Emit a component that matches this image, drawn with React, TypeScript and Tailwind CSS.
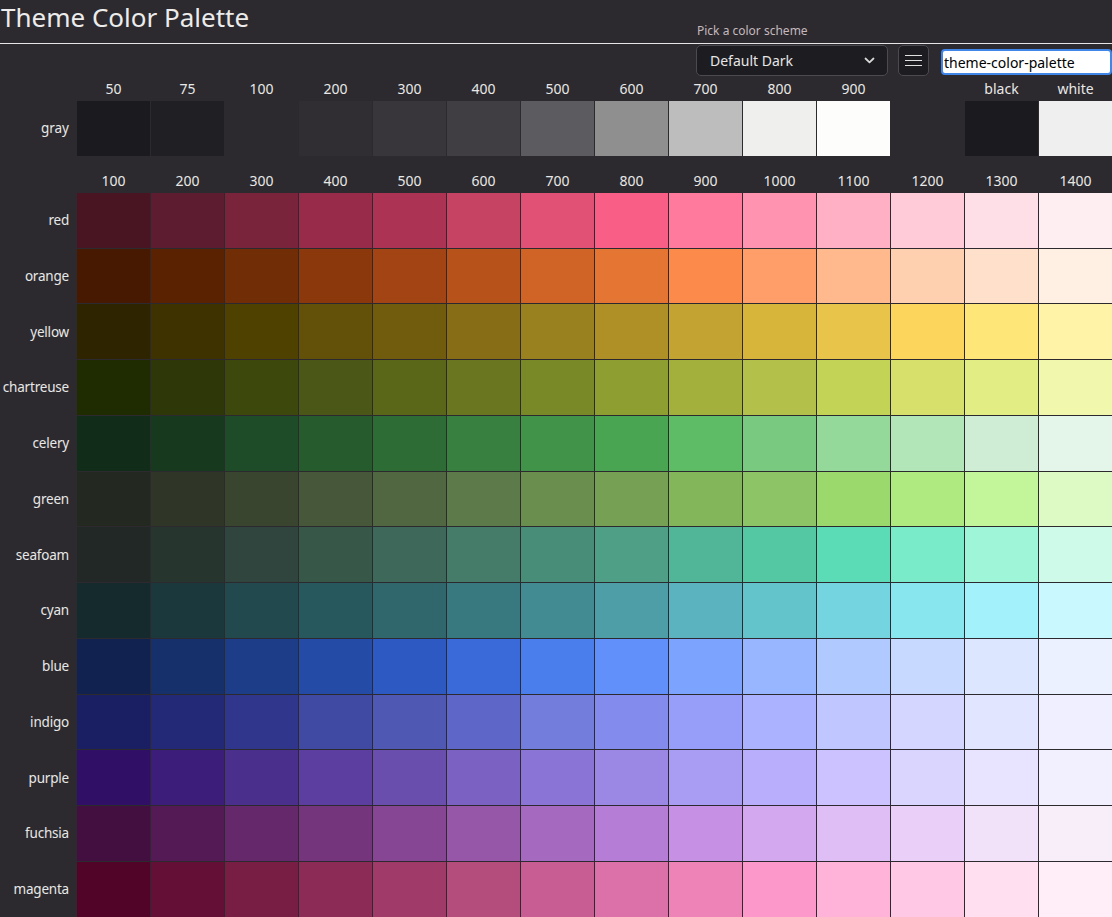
import React from "react"

const grayCols = ["50", "75", "100", "200", "300", "400", "500", "600", "700", "800", "900", "", "black", "white"]
const grayColors = ["#1b1a1e", "#201f23", "#2c2a2e", "#302e33", "#38363b", "#403e43", "#5c5b5f", "#8f8f8f", "#bdbdbd", "#efefed", "#fdfdfb", "", "#1b1a1e", "#efefef"]

const steps = ["100", "200", "300", "400", "500", "600", "700", "800", "900", "1000", "1100", "1200", "1300", "1400"]

const palette: [string, string[]][] = [
  ["red", ["#4a1522", "#5e1c30", "#7a243c", "#982b4a", "#ac3353", "#c64363", "#e15075", "#f95e87", "#ff7a9d", "#ff93b0", "#ffb0c5", "#ffcbd8", "#ffdfe7", "#ffeef1"]],
  ["orange", ["#461900", "#5a2200", "#712e06", "#8b390c", "#a24414", "#b7521a", "#d06426", "#e57533", "#fb8a4b", "#ff9e68", "#ffb98c", "#ffd0b0", "#ffe0ca", "#fff0e3"]],
  ["yellow", ["#2e2500", "#3e3200", "#4f4200", "#63510a", "#715b0c", "#876d16", "#9a811f", "#ae9027", "#c3a332", "#d7b53a", "#e9c44a", "#fbd55c", "#ffe678", "#fff3a8"]],
  ["chartreuse", ["#1f2b00", "#2d3708", "#3d480c", "#4a5716", "#5a6719", "#6a7720", "#7a8928", "#8e9e31", "#a3b03c", "#b3c14a", "#c3d356", "#d6e06b", "#e2ed84", "#f1f8ad"]],
  ["celery", ["#112c18", "#17391e", "#1e4c28", "#265b2d", "#2d6c34", "#37803f", "#409349", "#4aa553", "#5ebb66", "#79ca80", "#95d99a", "#b2e6b9", "#cfedd5", "#e4f6e9"]],
  ["green", ["#232820", "#2f3527", "#3a4530", "#47573a", "#506741", "#5d7b4a", "#6a8e4e", "#76a155", "#83b55a", "#8dc566", "#9cd96c", "#aeea80", "#c3f59a", "#ddfac5"]],
  ["seafoam", ["#212826", "#27352f", "#2f453d", "#375749", "#3e685a", "#447b69", "#488d78", "#4e9f86", "#50b697", "#53c8a2", "#5cdcb6", "#7aebc8", "#9ff5d8", "#cefaea"]],
  ["cyan", ["#142a2d", "#1b383c", "#224a4e", "#27585d", "#2f676c", "#37797f", "#438b93", "#4d9ea6", "#5ab3be", "#64c4cb", "#74d5e0", "#88e6ef", "#a3f2fb", "#c9f8ff"]],
  ["blue", ["#112250", "#16306c", "#1d3d88", "#244ba6", "#2d59c2", "#3a6ad9", "#4a7eec", "#6290fb", "#7ca4ff", "#98b5ff", "#b0c9ff", "#c8d9ff", "#dce6ff", "#ecf1ff"]],
  ["indigo", ["#1a1e62", "#232877", "#2f368c", "#414aa3", "#4f58b3", "#5e67c8", "#737ddb", "#838bec", "#969ef9", "#abb2ff", "#c0c6ff", "#d4d6ff", "#e2e5ff", "#efefff"]],
  ["purple", ["#300f66", "#3c1d7a", "#4a2f8d", "#5b3ea0", "#6a4eae", "#7b61c1", "#8a74d5", "#9a88e4", "#a99cf3", "#b9aefc", "#cbc2ff", "#dad5ff", "#e8e4ff", "#f2f0ff"]],
  ["fuchsia", ["#430f40", "#541a55", "#65286a", "#75357d", "#874693", "#9657a8", "#a56ac0", "#b57dd5", "#c690e5", "#d3a8ef", "#dfbdf5", "#ead0f8", "#f2e2f9", "#f8eefa"]],
  ["magenta", ["#510428", "#640f36", "#781e45", "#8d2b57", "#a03a68", "#b44c7c", "#c85d94", "#dc70a8", "#ee83b8", "#fc99ca", "#ffb3d8", "#ffc9e5", "#ffdff0", "#ffeef7"]],
]

export default function App() {
  return (
    <div className="min-h-screen bg-[#2c2a2e] text-[#e8e8e8] font-['Noto_Sans',sans-serif] pb-8">
      <h1 className="h-[44px] border-b border-[#e6e6e6] pl-[1px] text-[26px] leading-[34px] text-[#ececec]">
        Theme Color Palette
      </h1>

      <div className="-mt-[22px] flex items-end justify-end">
        <div className="flex flex-col">
          <label className="h-[21px] pl-[1px] text-[12px] leading-[17px] text-[#c4b9bf]">Pick a color scheme</label>
          <div className="mt-[2px] flex h-[31px] w-[192px] items-center justify-between rounded-[5px] border border-[#4c4a50] bg-[#1d1c20] pl-[13px] pr-[12px] text-[14px] text-[#e6e6e6]">
            <span>Default Dark</span>
            <svg width="11" height="7" viewBox="0 0 11 7" fill="none" stroke="#d8d8d8" strokeWidth="1.8" strokeLinecap="round" strokeLinejoin="round">
              <path d="M1.5 1.5 L5.5 5.3 L9.5 1.5" />
            </svg>
          </div>
        </div>
        <button className="ml-[10px] flex h-[31px] w-[31px] items-center justify-center rounded-[5px] border border-[#4c4a50] bg-[#1d1c20]">
          <svg width="17" height="11" viewBox="0 0 17 11" stroke="#e0e0e0" strokeWidth="1">
            <path d="M0 0.5 H17 M0 5.5 H17 M0 10.5 H17" />
          </svg>
        </button>
        <input
          readOnly
          value="theme-color-palette"
          className="ml-[12px] mb-[1px] h-[26px] w-[171px] rounded-[4px] border-2 border-[#3f86e8] bg-white pl-[1px] text-[14px] text-black outline-none"
        />
      </div>

      <div className="mt-[2px] grid grid-cols-[76px_repeat(14,1fr)] gap-px">
        <div />
        {grayCols.map((c, i) => (
          <div key={i} className="h-[22px] text-center text-[14px] leading-[22px]">{c}</div>
        ))}
        <div className="flex items-center justify-end pr-[7px] text-[13.5px]">gray</div>
        {grayColors.map((c, i) => (
          <div key={i} className="aspect-[4/3]" style={{ backgroundColor: c || "transparent" }} />
        ))}
      </div>

      <div className="mt-[14px] grid grid-cols-[76px_repeat(14,1fr)] gap-px">
        <div />
        {steps.map(s => (
          <div key={s} className="h-[22px] text-center text-[14px] leading-[22px]">{s}</div>
        ))}
        {palette.map(([name, colors]) => (
          <React.Fragment key={name}>
            <div className="flex items-center justify-end whitespace-nowrap pr-[7px] text-[13.5px] tracking-[-0.2px]">{name}</div>
            {colors.map((c, i) => (
              <div key={i} className="aspect-[4/3]" style={{ backgroundColor: c }} />
            ))}
          </React.Fragment>
        ))}
      </div>
    </div>
  )
}
